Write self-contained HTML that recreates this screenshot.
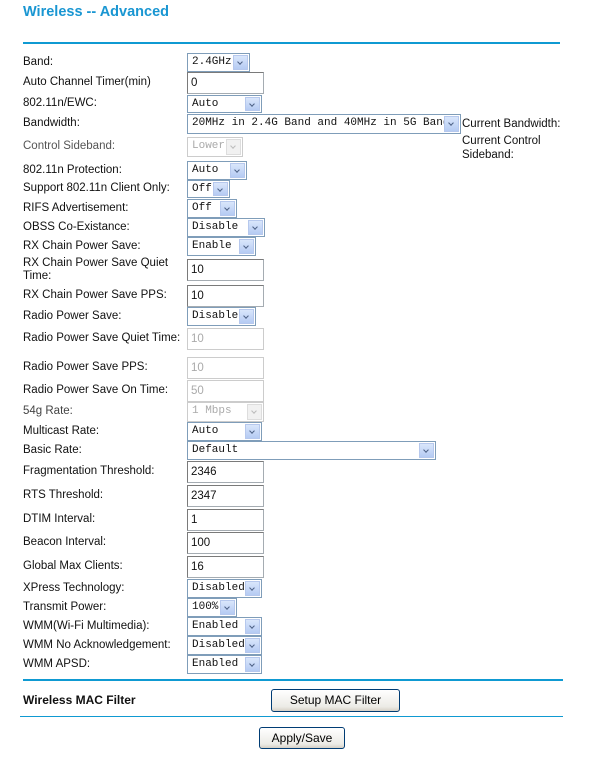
<!DOCTYPE html>
<html><head><style>
body{margin:0;width:607px;height:758px;background:#fff;position:relative;font-family:"Liberation Sans",Arial,sans-serif;font-size:11.5px;color:#111;overflow:hidden}
div{position:absolute}
.l{left:23px;white-space:nowrap;line-height:13px}
.s,.i{left:187px;box-sizing:border-box;border:1px solid #7f9db9;background:#fff;font-family:"Liberation Mono","Liberation Serif",monospace;font-size:11px;padding-left:4px;line-height:16px;white-space:nowrap;overflow:hidden}
.i{border-color:#a5acb2;border-top-color:#7a7a7a;border-left-color:#7a7a7a;padding-left:3px;font-family:"Liberation Sans",sans-serif;font-size:11.5px}
.d{color:#aaa;border-color:#ccc}
.s .a{position:absolute;right:1px;top:1px;bottom:1px;width:15px;background:linear-gradient(#d9e6fb,#b5cbf3);border:1px solid #b6c8ed;box-sizing:border-box}
.s .a:after{content:"";position:absolute;left:4px;top:4px;width:3px;height:3px;border-right:1.5px solid #4d6185;border-bottom:1.5px solid #4d6185;transform:rotate(45deg)}
.s.d .a{background:#f1f1f1;border-color:#ddd}
.s.d .a:after{border-color:#bbb}
.b{box-sizing:border-box;border:1px solid #003c74;border-radius:3px;background:linear-gradient(#fff,#ecebe6 80%,#d6d0c5);text-align:center;font-size:12px;color:#000}
</style></head><body>
<div style="left:23px;top:4px;font-weight:bold;font-size:14.5px;color:#1996d2">Wireless -- Advanced</div>
<div style="left:23px;top:42px;width:537px;height:2px;background:#0f9ad2"></div>

<div class="l" style="top:56px">Band:</div><div class="s" style="top:53px;width:63px;height:19px">2.4GHz<span class="a"></span></div>
<div class="l" style="top:76px">Auto Channel Timer(min)</div><div class="i" style="top:72px;width:77px;height:22px;line-height:20px">0</div>
<div class="l" style="top:97px">802.11n/EWC:</div><div class="s" style="top:95px;width:75px;height:18px">Auto<span class="a"></span></div>
<div class="l" style="top:117px">Bandwidth:</div><div class="s" style="top:114px;width:274px;height:20px">20MHz in 2.4G Band and 40MHz in 5G Band<span class="a"></span></div>
<div style="left:462px;top:118px">Current Bandwidth:</div>
<div class="l" style="top:140px;color:#555">Control Sideband:</div><div class="s d" style="top:137px;width:56px;height:20px">Lower<span class="a"></span></div>
<div style="left:462px;top:134px;line-height:14px">Current Control<br>Sideband:</div>
<div class="l" style="top:164px">802.11n Protection:</div><div class="s" style="top:161px;width:60px;height:19px">Auto<span class="a"></span></div>
<div class="l" style="top:182px">Support 802.11n Client Only:</div><div class="s" style="top:180px;width:43px;height:18px">Off<span class="a"></span></div>
<div class="l" style="top:202px">RIFS Advertisement:</div><div class="s" style="top:199px;width:50px;height:19px">Off<span class="a"></span></div>
<div class="l" style="top:221px">OBSS Co-Existance:</div><div class="s" style="top:218px;width:78px;height:19px">Disable<span class="a"></span></div>
<div class="l" style="top:240px">RX Chain Power Save:</div><div class="s" style="top:237px;width:69px;height:19px">Enable<span class="a"></span></div>
<div class="l" style="top:257px">RX Chain Power Save Quiet<br>Time:</div><div class="i" style="top:259px;width:77px;height:22px;line-height:20px">10</div>
<div class="l" style="top:289px">RX Chain Power Save PPS:</div><div class="i" style="top:285px;width:77px;height:22px;line-height:20px">10</div>
<div class="l" style="top:310px">Radio Power Save:</div><div class="s" style="top:307px;width:69px;height:19px">Disable<span class="a"></span></div>
<div class="l" style="top:332px">Radio Power Save Quiet Time:</div><div class="i d" style="top:328px;width:77px;height:22px;line-height:20px">10</div>
<div class="l" style="top:361px">Radio Power Save PPS:</div><div class="i d" style="top:357px;width:77px;height:22px;line-height:20px">10</div>
<div class="l" style="top:384px">Radio Power Save On Time:</div><div class="i d" style="top:380px;width:77px;height:22px;line-height:20px">50</div>
<div class="l" style="top:405px;color:#444">54g Rate:</div><div class="s d" style="top:402px;width:77px;height:20px">1 Mbps<span class="a"></span></div>
<div class="l" style="top:425px">Multicast Rate:</div><div class="s" style="top:422px;width:75px;height:19px">Auto<span class="a"></span></div>
<div class="l" style="top:444px">Basic Rate:</div><div class="s" style="top:441px;width:249px;height:19px">Default<span class="a"></span></div>
<div class="l" style="top:465px">Fragmentation Threshold:</div><div class="i" style="top:461px;width:77px;height:22px;line-height:20px">2346</div>
<div class="l" style="top:489px">RTS Threshold:</div><div class="i" style="top:485px;width:77px;height:22px;line-height:20px">2347</div>
<div class="l" style="top:513px">DTIM Interval:</div><div class="i" style="top:509px;width:77px;height:22px;line-height:20px">1</div>
<div class="l" style="top:536px">Beacon Interval:</div><div class="i" style="top:532px;width:77px;height:22px;line-height:20px">100</div>
<div class="l" style="top:560px">Global Max Clients:</div><div class="i" style="top:556px;width:77px;height:22px;line-height:20px">16</div>
<div class="l" style="top:582px">XPress Technology:</div><div class="s" style="top:579px;width:75px;height:19px">Disabled<span class="a"></span></div>
<div class="l" style="top:601px">Transmit Power:</div><div class="s" style="top:598px;width:50px;height:19px">100%<span class="a"></span></div>
<div class="l" style="top:620px">WMM(Wi-Fi Multimedia):</div><div class="s" style="top:617px;width:75px;height:19px">Enabled<span class="a"></span></div>
<div class="l" style="top:639px">WMM No Acknowledgement:</div><div class="s" style="top:636px;width:75px;height:19px">Disabled<span class="a"></span></div>
<div class="l" style="top:658px">WMM APSD:</div><div class="s" style="top:655px;width:75px;height:19px">Enabled<span class="a"></span></div>

<div style="left:23px;top:679px;width:540px;height:2px;background:#0f9ad2"></div>
<div class="l" style="top:694px;font-weight:bold;font-size:12px">Wireless MAC Filter</div>
<div class="b" style="left:271px;top:689px;width:129px;height:23px;line-height:21px">Setup MAC Filter</div>
<div style="left:20px;top:716px;width:543px;height:1px;background:#0f9ad2"></div>
<div class="b" style="left:259px;top:727px;width:86px;height:22px;line-height:20px">Apply/Save</div>
</body></html>
